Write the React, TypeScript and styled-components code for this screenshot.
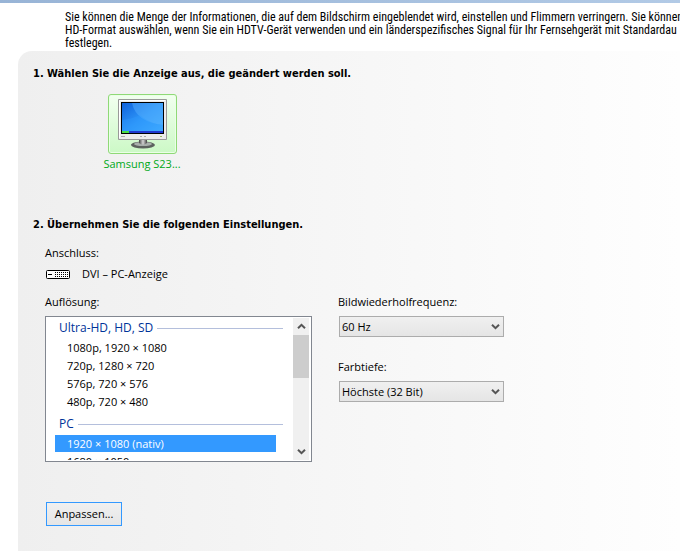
import React, { useState } from "react";
import styled, { createGlobalStyle } from "styled-components";

const GlobalStyle = createGlobalStyle`
  *, *::before, *::after { box-sizing: border-box; }
  body {
    margin: 0;
    background: #fff;
    color: #000;
    font-family: "Open Sans", "Noto Sans", sans-serif;
    font-size: 11px;
    line-height: 16px;
  }
  button, select, input { font: inherit; color: inherit; }
`;

const Page = styled.main`
  display: flex;
  flex-direction: column;
  min-height: 100vh;
  overflow: hidden;
`;

const TopBar = styled.div`
  height: 3px;
  background: linear-gradient(90deg, #98b4d6, #b2cae6);
`;

const Intro = styled.p`
  margin: 0;
  padding: 8px 0 0 65px;
  height: 48px;
  overflow: hidden;
  white-space: pre;
  font-family: "Roboto Condensed", Roboto, sans-serif;
  font-size: 12px;
  line-height: 13px;
`;

const Panel = styled.div`
  flex: 1;
  margin-left: 18px;
  padding: 14px 15px 24px;
  border-top-left-radius: 14px;
  background: linear-gradient(90deg, #efefef, #fefefe);
`;

const Step = styled.section<{ $space?: number }>`
  padding-bottom: ${(p) => p.$space ?? 0}px;
`;

const Heading = styled.h2`
  margin: 0;
  font-family: "DejaVu Sans Condensed", "DejaVu Sans", sans-serif;
  font-size: 11px;
  font-weight: bold;
  line-height: 18px;
`;

const Display = styled.button`
  display: flex;
  flex-direction: column;
  align-items: center;
  gap: 2px;
  width: 80px;
  margin: 11px 0 0 69px;
  padding: 0;
  border: 0;
  background: none;
  color: #00a818;
  white-space: nowrap;
`;

const DisplayTile = styled.span`
  display: flex;
  align-items: center;
  justify-content: center;
  width: 69px;
  height: 60px;
  border: 1px solid #8fd977;
  border-radius: 3px;
  background: linear-gradient(#f2fff0, #ccf9c6);
  box-shadow: inset 0 0 0 1px #eaffe6;
`;

const Body = styled.div`
  padding: 10px 0 0 12px;
`;

const Label = styled.label`
  display: block;
  line-height: 18px;
`;

const Connector = styled.div`
  display: flex;
  align-items: center;
  gap: 12px;
  height: 18px;
  margin: 3px 0 10px 1px;
`;

const Columns = styled.div`
  display: grid;
  grid-template-columns: 267px 166px;
  column-gap: 26px;
`;

const Field = styled.div`
  padding-bottom: 21px;
`;

const ListFrame = styled.div`
  display: flex;
  height: 146px;
  margin-top: 5px;
  padding: 1px;
  border: 1px solid #828790;
  background: #fff;
`;

const ListItems = styled.div`
  flex: 1;
  overflow: hidden;
  padding: 1px 17px 0 8px;
`;

const Group = styled.fieldset`
  min-width: 0;
  margin: 0;
  padding: 0 0 4px;
  border: 0;
`;

const GroupTitle = styled.legend`
  display: flex;
  align-items: center;
  gap: 4px;
  width: 100%;
  margin-bottom: 2px;
  padding: 0 0 0 4px;
  color: #003399;
  font-size: 12px;
  line-height: 18px;

  &::after {
    content: "";
    flex: 1;
    height: 1px;
    margin-right: -7px;
    background: #b4bfdc;
  }
`;

const Option = styled.label<{ $selected: boolean }>`
  display: block;
  margin-bottom: 1px;
  padding-left: 12px;
  line-height: 17px;
  color: ${(p) => (p.$selected ? "#fff" : "#000")};
  background: ${(p) => (p.$selected ? "#3399ff" : "transparent")};
`;

const OptionInput = styled.input`
  appearance: none;
  width: 0;
  height: 0;
  margin: 0;
`;

const Scrollbar = styled.div`
  display: flex;
  flex-direction: column;
  width: 16px;
  margin-right: 1px;
  background: #f0f0f0;
`;

const ScrollButton = styled.button`
  display: flex;
  align-items: center;
  justify-content: center;
  height: 17px;
  padding: 0;
  border: 0;
  background: none;
`;

const Thumb = styled.div`
  height: 43px;
  margin-bottom: auto;
  background: #cdcdcd;
`;

const SelectWrap = styled.div`
  display: grid;
  align-items: center;
  margin: 5px 0 0 1px;

  & > * { grid-area: 1 / 1; }
  & > svg { justify-self: end; margin-right: 4px; pointer-events: none; }
`;

const Select = styled.select`
  appearance: none;
  width: 100%;
  height: 21px;
  padding: 0 20px 0 2px;
  border: 1px solid #acacac;
  border-radius: 0;
  background: linear-gradient(#f0f0f0, #e5e5e5);
`;

const Action = styled.button`
  width: 76px;
  height: 24px;
  margin: 19px 0 0 1px;
  padding: 0;
  border: 1px solid #3399ff;
  background: linear-gradient(#f0f0f0, #e5e5e5);
`;

const Chevron = ({ up = false }: { up?: boolean }) => (
  <svg width="9" height="7" viewBox="0 0 9 7" aria-hidden="true">
    <path
      d={up ? "M1 5.2 4.5 1.8 8 5.2" : "M1 1.8 4.5 5.2 8 1.8"}
      fill="none"
      stroke="#555"
      strokeWidth="2"
    />
  </svg>
);

const MonitorIcon = () => (
  <svg width="49" height="50" viewBox="0 0 49 50" aria-hidden="true">
    <defs>
      <linearGradient id="screen" x1="0" y1="0" x2="1" y2="1">
        <stop offset="0" stopColor="#0f62dc" />
        <stop offset="0.5" stopColor="#2e96f8" />
        <stop offset="1" stopColor="#48b2ff" />
      </linearGradient>
      <linearGradient id="stand" x1="0" y1="0" x2="1" y2="0">
        <stop offset="0" stopColor="#444" />
        <stop offset="0.5" stopColor="#d4d4d4" />
        <stop offset="1" stopColor="#444" />
      </linearGradient>
    </defs>
    <ellipse cx="25" cy="46" rx="12" ry="3.5" fill="#5c625e" />
    <ellipse cx="25" cy="45" rx="9" ry="2" fill="#a9b0ac" />
    <path d="M21 40h8v4q-4 3-8 0z" fill="url(#stand)" />
    <path d="M.5.5h48v40H.5z" fill="#ececec" stroke="#999" />
    <path d="M1.5 39V1.5H47" fill="none" stroke="#fff" />
    <path d="M3 3h43v32H3z" fill="#000" />
    <path d="M4 4h41v30H4z" fill="url(#screen)" />
    <path d="M14 4h31v22Q18 23 14 4z" fill="#5ab4ff" opacity=".45" />
    <path d="M4 21Q14 20 22 16q10 9 23 10v6H4z" fill="#2d9bff" opacity=".35" />
    <path d="M4 32h41v2H4z" fill="#2038d0" />
    <path d="M4 32h7v2H4z" fill="#49dc43" />
    <path d="M3 37.5h4M22 37.5h2m2 0h2" stroke="#aaa" />
    <path d="M42 37.5h2" stroke="#98be5c" />
  </svg>
);

const ConnectorIcon = () => (
  <svg width="24" height="9" viewBox="0 0 24 9" aria-hidden="true">
    <rect x=".5" y=".5" width="23" height="8" rx="1" fill="#fff" stroke="#000" />
    <path d="M2 4.5h4" stroke="#000" />
    <path d="M9 2.5h13M9 4.5h13M9 6.5h13" stroke="#000" strokeDasharray="1 1" />
  </svg>
);

const introText = [
  "Sie können die Menge der Informationen, die auf dem Bildschirm eingeblendet wird, einstellen und Flimmern verringern. Sie können",
  "HD-Format auswählen, wenn Sie ein HDTV-Gerät verwenden und ein länderspezifisches Signal für Ihr Fernsehgerät mit Standardau",
  "festlegen.",
].join("\n");

const groups = [
  {
    title: "Ultra-HD, HD, SD",
    items: ["1080p, 1920 × 1080", "720p, 1280 × 720", "576p, 720 × 576", "480p, 720 × 480"],
  },
  { title: "PC", items: ["1920 × 1080 (nativ)", "1680 × 1050"] },
];

export default function App() {
  const [resolution, setResolution] = useState("1920 × 1080 (nativ)");

  return (
    <>
      <GlobalStyle />
      <Page>
        <TopBar />
        <Intro>{introText}</Intro>
        <Panel>
          <Step $space={44}>
            <Heading>1. Wählen Sie die Anzeige aus, die geändert werden soll.</Heading>
            <Display type="button">
              <DisplayTile><MonitorIcon /></DisplayTile>
              Samsung S23...
            </Display>
          </Step>
          <Step>
            <Heading>2. Übernehmen Sie die folgenden Einstellungen.</Heading>
            <Body>
              <Label as="div">Anschluss:</Label>
              <Connector><ConnectorIcon />DVI – PC-Anzeige</Connector>
              <Columns>
                <Field>
                  <Label as="div" id="resolution-label">Auflösung:</Label>
                  <ListFrame>
                    <ListItems role="radiogroup" aria-labelledby="resolution-label">
                      {groups.map((group) => (
                        <Group key={group.title}>
                          <GroupTitle>{group.title}</GroupTitle>
                          {group.items.map((item) => (
                            <Option key={item} $selected={item === resolution}>
                              <OptionInput
                                type="radio"
                                name="resolution"
                                checked={item === resolution}
                                onChange={() => setResolution(item)}
                              />
                              {item}
                            </Option>
                          ))}
                        </Group>
                      ))}
                    </ListItems>
                    <Scrollbar>
                      <ScrollButton type="button" aria-label="Nach oben"><Chevron up /></ScrollButton>
                      <Thumb />
                      <ScrollButton type="button" aria-label="Nach unten"><Chevron /></ScrollButton>
                    </Scrollbar>
                  </ListFrame>
                </Field>
                <div>
                  <Field>
                    <Label htmlFor="refresh">Bildwiederholfrequenz:</Label>
                    <SelectWrap>
                      <Select id="refresh"><option>60 Hz</option></Select>
                      <Chevron />
                    </SelectWrap>
                  </Field>
                  <Field>
                    <Label htmlFor="depth">Farbtiefe:</Label>
                    <SelectWrap>
                      <Select id="depth"><option>Höchste (32 Bit)</option></Select>
                      <Chevron />
                    </SelectWrap>
                  </Field>
                </div>
              </Columns>
              <Action type="button">Anpassen...</Action>
            </Body>
          </Step>
        </Panel>
      </Page>
    </>
  );
}
